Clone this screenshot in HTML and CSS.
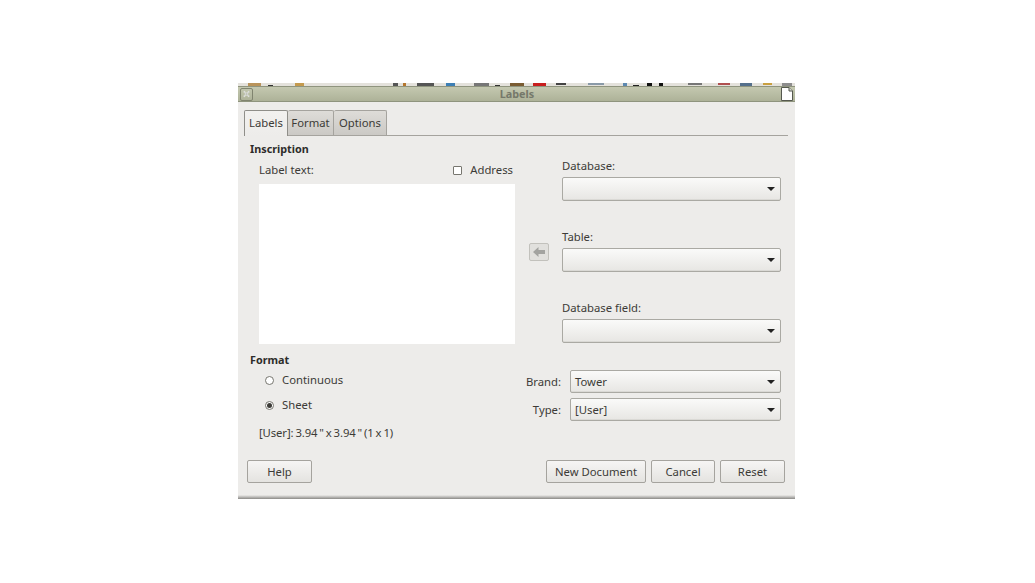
FILE: index.html
```html
<!DOCTYPE html>
<html lang="en">
<head>
<meta charset="utf-8">
<title>Labels</title>
<link rel="stylesheet" href="styles.css">
</head>
<body>
<div class="window">
  <svg class="strip" width="557" height="3" viewBox="0 0 557 3">
    <rect width="557" height="3" fill="#e4e2dc"/>
    <rect x="10" width="13" height="3" fill="#b9935a"/><rect x="30" y="2" width="5" height="1" fill="#333"/>
    <rect x="57" width="9" height="3" fill="#c49a4e"/><rect x="155" width="5" height="3" fill="#555"/>
    <rect x="165" y="0" width="3" height="3" fill="#b5762d"/><rect x="179" width="17" height="3" fill="#555"/>
    <rect x="208" width="9" height="3" fill="#3d7fb5"/><rect x="236" width="15" height="3" fill="#777"/>
    <rect x="257" y="2" width="5" height="1" fill="#333"/><rect x="272" width="14" height="3" fill="#7a5c32"/>
    <rect x="295" width="13" height="3" fill="#c81e1e"/><rect x="318" width="10" height="2" fill="#444"/>
    <rect x="350" width="16" height="2" fill="#8a9aa8"/><rect x="385" width="4" height="3" fill="#5c88b0"/>
    <rect x="395" y="2" width="6" height="1" fill="#222"/><rect x="409" width="5" height="3" fill="#111"/>
    <rect x="421" width="4" height="3" fill="#111"/><rect x="450" width="14" height="2" fill="#777"/>
    <rect x="480" width="12" height="2" fill="#b05050"/><rect x="502" width="12" height="3" fill="#55708c"/>
    <rect x="525" width="9" height="2" fill="#c9a040"/><rect x="544" width="10" height="3" fill="#8d8d8d"/>
  </svg>
  <header class="titlebar">
    <span class="close-box">
      <svg width="12" height="12" viewBox="0 0 12 12"><path d="M3 3l6 6M9 3l-6 6" stroke="#fff" stroke-width="1.6"/><path d="M3 3l6 6M9 3l-6 6" stroke="#8a8f80" stroke-width=".7"/></svg>
    </span>
    <span class="title">Labels</span>
    <svg class="doc-icon" width="12" height="14" viewBox="0 0 12 14"><path d="M.5.5h7.5l3.500 3.500v9.500h-11z" fill="#fff" stroke="#55584e"/><path d="M8 .5v3.500h3.500" fill="#d8d8d2" stroke="#55584e"/></svg>
  </header>
  <div class="body">
    <nav class="tabs">
      <span class="tab active">Labels</span>
      <span class="tab">Format</span>
      <span class="tab">Options</span>
    </nav>
    <main class="panel">
      <section class="inscription">
        <h2 class="heading">Inscription</h2>
        <div class="label-row">
          <span>Label text:</span>
          <label class="address"><span class="check"></span>Address</label>
        </div>
        <div class="textbox"></div>
      </section>
      <div class="insert-col">
        <span class="insert">
          <svg width="14" height="12" viewBox="0 0 14 12"><path d="M1 6l5.500-5v3h6.500v4h-6.500v3z" fill="#a3a3a0"/></svg>
        </span>
      </div>
      <section class="db-col">
        <div class="db-field"><span class="field-label">Database:</span><div class="combo"><i class="caret"></i></div></div>
        <div class="db-field"><span class="field-label">Table:</span><div class="combo"><i class="caret"></i></div></div>
        <div class="db-field"><span class="field-label">Database field:</span><div class="combo"><i class="caret"></i></div></div>
      </section>
      <section class="format">
        <h2 class="heading">Format</h2>
        <div class="radio-row first"><span class="radio"></span>Continuous</div>
        <div class="radio-row"><span class="radio on"></span>Sheet</div>
        <p class="info">[User]: 3.94 " x 3.94 " (1 x 1)</p>
      </section>
      <section class="brand">
        <div class="brand-row"><span class="brand-label">Brand:</span><div class="combo"><span>Tower</span><i class="caret"></i></div></div>
        <div class="brand-row"><span class="brand-label">Type:</span><div class="combo"><span>[User]</span><i class="caret"></i></div></div>
      </section>
    </main>
    <footer class="buttons">
      <button class="btn help">Help</button>
      <button class="btn new">New Document</button>
      <button class="btn cancel">Cancel</button>
      <button class="btn reset">Reset</button>
    </footer>
  </div>
  <div class="bottom-edge"></div>
</div>
</body>
</html>
```
FILE: styles.css
```css
* { box-sizing: border-box; }
html, body { margin: 0; background: #fff; }
body { padding: 83px 0 0 238px; font: 11.3px/16px "Noto Sans", "Open Sans", sans-serif; color: #3c3b37; }
.window { width: 557px; height: 416px; display: flex; flex-direction: column; background: #edecea; }
.strip { display: block; flex: none; }
.titlebar { flex: none; height: 16px; display: flex; align-items: center; justify-content: space-between; padding: 0 2px; background: linear-gradient(#c4c8b0, #adb298); border-top: 1px solid #8f947e; border-bottom: 1px solid #8f947e; }
.close-box { width: 13px; height: 13px; display: flex; align-items: center; justify-content: center; border: 1px solid #80846f; border-radius: 2px; }
.title { font-size: 10.8px; font-weight: 700; color: #75786a; }
.doc-icon { margin-top: -1px; }
.body { flex: 1; display: flex; flex-direction: column; padding: 8px 7px 0 6px; }
.tabs { height: 26px; display: flex; align-items: flex-end; border-bottom: 1px solid #a5a39e; }
.tab { width: 46px; height: 25px; padding-top: 4px; text-align: center; background: linear-gradient(#dedcd8, #cbc9c5); border: 1px solid #a5a39e; border-bottom: 0; border-left-width: 0; border-radius: 2px 2px 0 0; }
.tab:last-child { width: 53px; }
.tab.active { width: 44px; height: 26px; padding-top: 4px; margin-bottom: -1px; background: linear-gradient(#f2f1ef, #edecea); border-left-width: 1px; border-color: #8f8e89; }
.panel { flex: none; display: grid; grid-template-columns: 265px 47px 219px; grid-template-rows: 212px 91px; margin-left: 6px; }
.heading { margin: 0; font-size: 10.8px; line-height: 16px; font-weight: 700; color: #2e2d2a; }
.inscription { padding-top: 5px; }
.label-row { display: flex; justify-content: space-between; height: 18px; margin: 5px 0 0 9px; padding-right: 2px; }
.address { display: flex; align-items: center; height: 16px; }
.check { width: 9px; height: 9px; margin-right: 8px; border: 1px solid #77766f; background: #fff; border-radius: 1px; }
.textbox { width: 256px; height: 160px; margin: 4px 0 0 9px; background: #fff; }
.insert-col { display: flex; justify-content: center; padding-top: 107px; }
.insert { width: 20px; height: 18px; display: flex; align-items: center; justify-content: center; background: #e1e0dd; border: 1px solid #c2c1bc; border-radius: 2px; }
.db-col { display: flex; flex-direction: column; gap: 27px; padding-top: 22px; }
.db-field { height: 44px; }
.field-label { display: block; height: 19px; }
.combo { height: 24px; display: flex; align-items: center; justify-content: space-between; padding: 0 5px 0 4px; border: 1px solid #aaa9a3; border-radius: 2px; background: linear-gradient(#fafaf9, #e7e6e3); box-shadow: inset 0 -1px 0 #dad9d5; }
.caret { margin-left: auto; width: 0; height: 0; border-left: 4px solid transparent; border-right: 4px solid transparent; border-top: 4px solid #222; }
.format { padding-top: 4px; }
.radio-row { display: flex; align-items: center; height: 16px; margin: 0 0 9px 15px; }
.radio-row.first { margin-top: 4px; }
.radio { position: relative; width: 9px; height: 9px; margin-right: 8px; background: #fff; border: 1px solid #77766f; border-radius: 50%; }
.radio.on::after { content: ""; position: absolute; inset: 1px; border-radius: 50%; background: #3c3b37; }
.info { margin: 12px 0 0 9px; word-spacing: -.9px; letter-spacing: -.1px; }
.brand { grid-column: 2 / 4; display: flex; flex-direction: column; gap: 5px; padding: 22px 0 0 8px; margin-left: -5px; }
.brand-row { display: flex; align-items: center; }
.brand-label { width: 43px; text-align: right; margin-right: 9px; }
.brand-row .combo { flex: 1; height: 23px; }
.buttons { display: flex; gap: 5px; margin-top: 21px; padding: 0 3px; }
.btn { height: 23px; padding: 0; font: inherit; color: inherit; border: 1px solid #a5a39e; border-radius: 2px; background: linear-gradient(#f6f5f4, #e4e3e0); }
.help { width: 65px; margin-right: auto; }
.new { width: 100px; }
.cancel { width: 64px; }
.reset { width: 65px; }
.bottom-edge { flex: none; height: 4px; background: linear-gradient(#edecea, #8a8986); }
```
